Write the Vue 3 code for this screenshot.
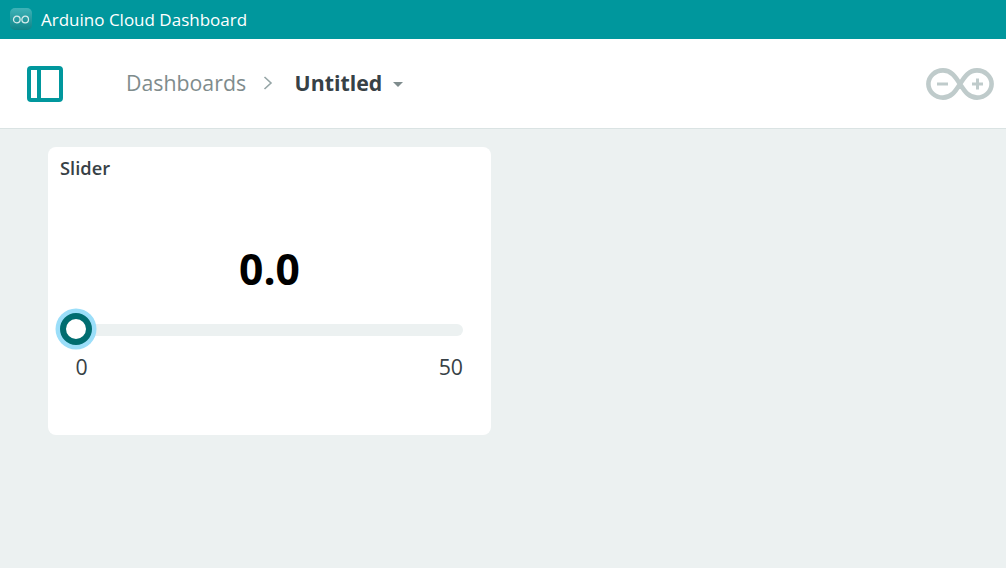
<script setup>
const title = 'Arduino Cloud Dashboard'
</script>

<template>
  <div class="app">
    <div class="titlebar">
      <div class="app-icon">
        <svg width="18" height="9" viewBox="0 0 18 9" fill="none" stroke="#d6ecec" stroke-width="1.300">
          <circle cx="4.800" cy="4.500" r="3.300" />
          <circle cx="13.200" cy="4.500" r="3.300" />
        </svg>
      </div>
      <span class="title-text">{{ title }}</span>
    </div>
    <header class="header">
      <svg class="panel-icon" width="36" height="36" viewBox="0 0 36 36" fill="none" stroke="#00979d" stroke-width="4">
        <rect x="2" y="2" width="32" height="32" rx="2" />
        <path d="M12 2v32" />
      </svg>
      <nav class="crumbs">
        <span class="crumb">Dashboards</span>
        <svg class="chevron" width="10" height="14" viewBox="0 0 10 14" fill="none" stroke="#95a5a6" stroke-width="1.6">
          <path d="M1.500 1l6.500 6-6.500 6" />
        </svg>
        <span class="current">Untitled</span>
        <span class="caret"></span>
      </nav>
      <svg class="logo" width="68" height="32" viewBox="0 0 68 32" fill="none" stroke="#bfcbcb">
        <path stroke-width="4.600" d="M34 16C29 8 25 2.400 17 2.400C9 2.400 2.400 8.500 2.400 16C2.400 23.500 9 29.600 17 29.600C25 29.600 29 24 34 16C39 8 43 2.400 51 2.400C59 2.400 65.600 8.500 65.600 16C65.600 23.500 59 29.600 51 29.600C43 29.600 39 24 34 16Z" />
        <path stroke-width="3" d="M11 16h11M46 16h11M51.500 10.500v11" />
      </svg>
    </header>
    <main class="content">
      <section class="card">
        <h2 class="card-title">Slider</h2>
        <div class="value">0.0</div>
        <div class="track">
          <div class="thumb"></div>
        </div>
        <div class="limits">
          <span class="min">0</span>
          <span>50</span>
        </div>
      </section>
    </main>
  </div>
</template>

<style>
html, body { margin: 0; padding: 0; }
</style>

<style scoped>
.app {
  width: 1006px;
  height: 568px;
  display: flex;
  flex-direction: column;
  overflow: hidden;
  background: #ecf1f1;
  font-family: "Open Sans", "Noto Sans", sans-serif;
}
.titlebar {
  height: 39px;
  flex: none;
  display: flex;
  align-items: center;
  gap: 9px;
  padding: 0 0 0 10px;
  box-sizing: border-box;
  background: #00979d;
  color: #fff;
}
.app-icon {
  width: 22px;
  height: 22px;
  margin-top: -1px;
  border-radius: 5px;
  background: linear-gradient(#3fb3b8, #0f8488);
  display: flex;
  align-items: center;
  justify-content: center;
}
.title-text {
  font-size: 17px;
  line-height: 22px;
}
.header {
  height: 90px;
  flex: none;
  box-sizing: border-box;
  display: flex;
  align-items: center;
  padding: 0 12px 0 27px;
  background: #fff;
  border-bottom: 1px solid #dae3e3;
}
.panel-icon { flex: none; }
.crumbs {
  display: flex;
  align-items: center;
  margin: 0 0 1px 63px;
  font-size: 21.300px;
  line-height: 28px;
  flex: 1;
}
.crumb { color: #7f8c8d; }
.chevron { margin: 0 0 0 17px; }
.current {
  margin-left: 21.500px;
  font-weight: 700;
  color: #374146;
}
.caret {
  margin-left: 11px;
  margin-top: 2px;
  border-left: 5px solid transparent;
  border-right: 5px solid transparent;
  border-top: 5.500px solid #7f8c8d;
}
.logo { flex: none; }
.content {
  flex: 1;
  padding: 18px 0 0 48px;
}
.card {
  width: 443px;
  height: 288px;
  box-sizing: border-box;
  padding: 10px 28px 0 12px;
  background: #fff;
  border-radius: 8px;
}
.card-title {
  margin: 0;
  font-size: 18.300px;
  line-height: 22px;
  font-weight: 600;
  color: #374146;
}
.value {
  margin-top: 62px;
  padding-left: 16px;
  text-align: center;
  font-size: 42.600px;
  line-height: 54px;
  font-weight: 700;
  color: #000;
}
.track {
  position: relative;
  height: 12px;
  margin: 29px 0 0 4px;
  border-radius: 6px;
  background: #ecf1f1;
}
.thumb {
  position: absolute;
  left: -4.500px;
  top: -11px;
  width: 20px;
  height: 20px;
  border: 6.500px solid #006d70;
  border-radius: 50%;
  background: #fff;
  box-shadow: 0 0 0 4.500px #9bdef9;
}
.limits {
  display: flex;
  justify-content: space-between;
  margin: 17px 0 0 15.500px;
  font-size: 21.300px;
  line-height: 27px;
  color: #374146;
}
</style>
